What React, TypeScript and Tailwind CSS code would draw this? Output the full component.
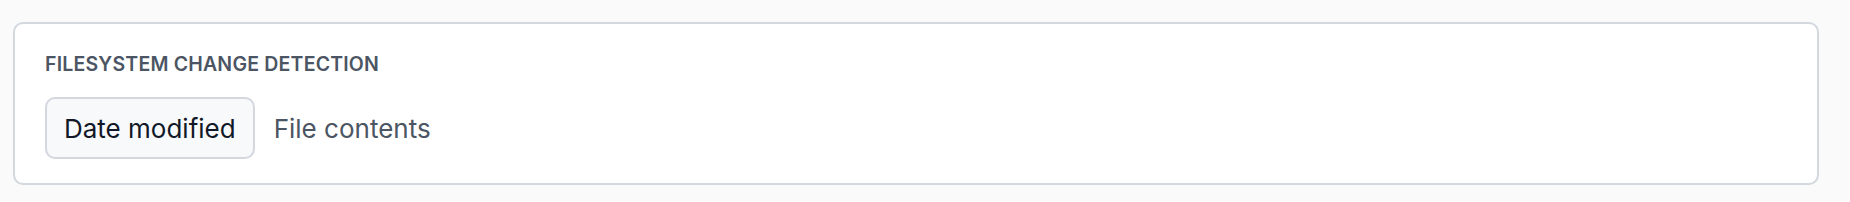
export default function App() {
  return (
    <div
      className="min-h-[202px] w-full bg-[#fafafa] pt-[22px] pb-[17px] pl-[13px] pr-[31px]"
      style={{ fontFamily: "Inter, 'Noto Sans', sans-serif" }}
    >
      <div className="rounded-[10px] border-2 border-[#d3d7de] bg-white px-[30px] pt-[27px] pb-[24px]">
        <h3 className="text-[19.5px] leading-[26px] font-semibold uppercase tracking-[0.01em] text-[#4b5563]">
          Filesystem change detection
        </h3>
        <div className="mt-[20px] flex items-center">
          <button className="h-[62px] rounded-[10px] border-2 border-[#d3d7de] bg-[#f8f9fb] px-[17px] text-[26px] leading-[39px] text-[#111827]">
            Date modified
          </button>
          <button className="h-[62px] rounded-[10px] border-2 border-transparent px-[17px] text-[26px] leading-[39px] text-[#4b5563]">
            File contents
          </button>
        </div>
      </div>
    </div>
  );
}
